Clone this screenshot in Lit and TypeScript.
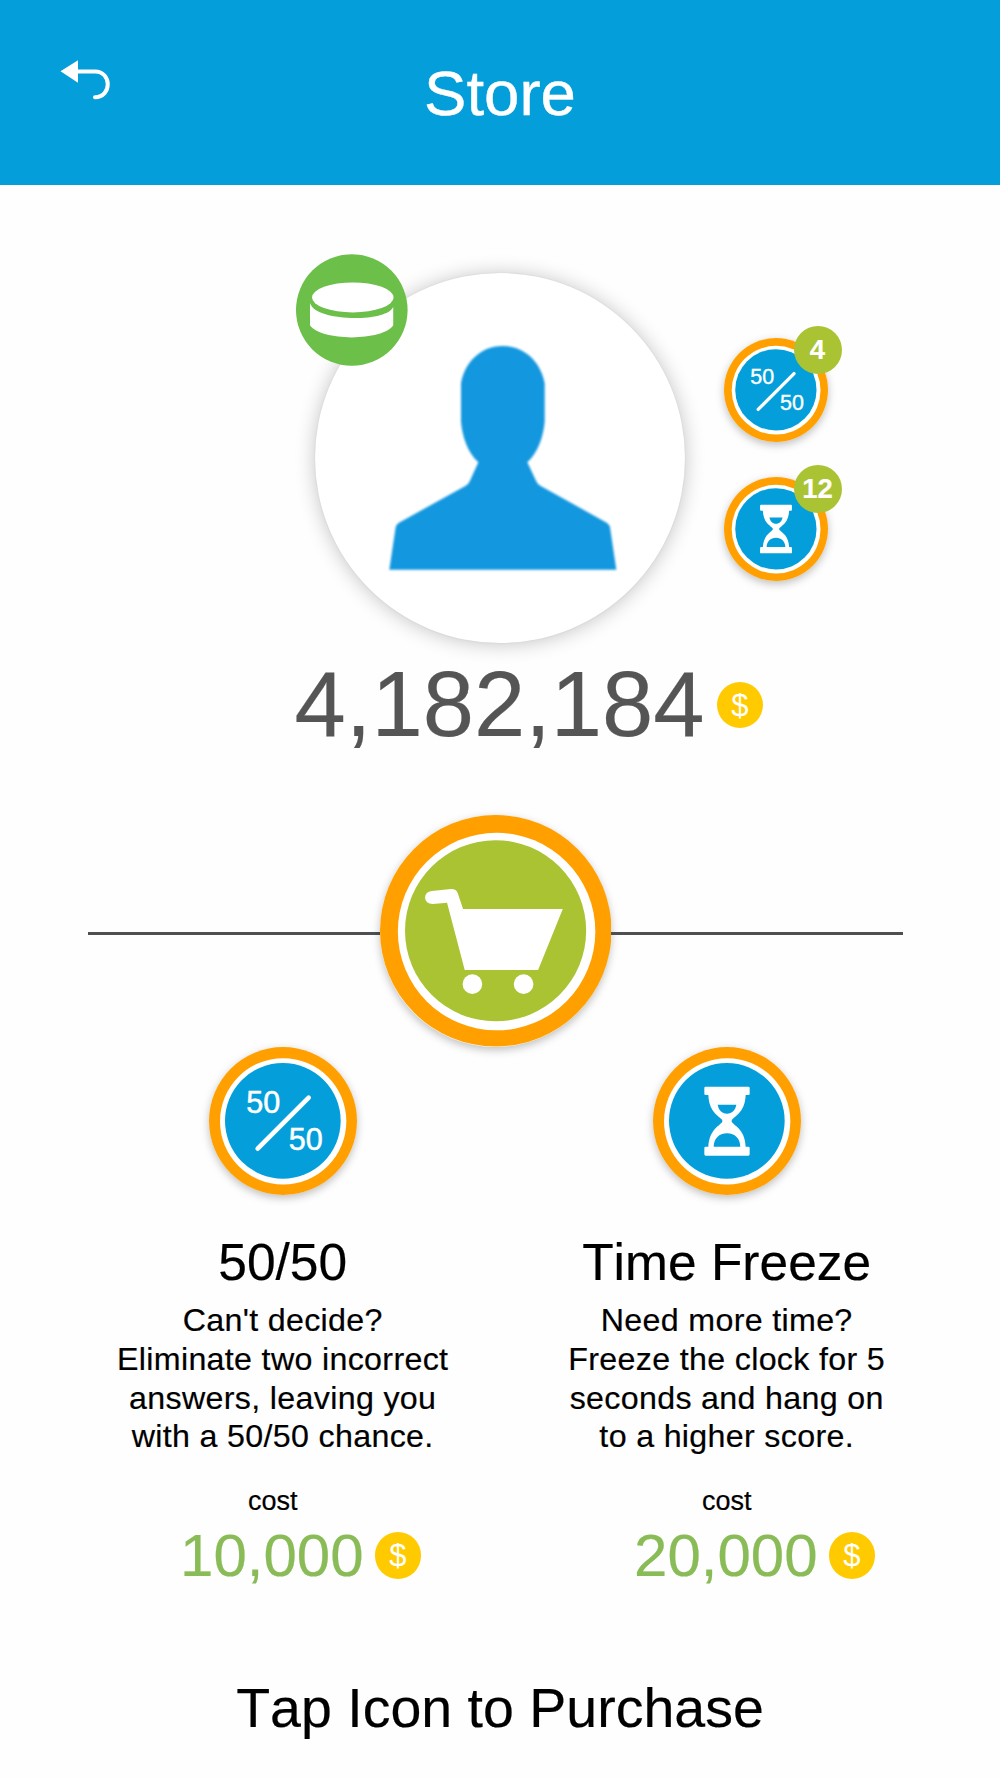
import { LitElement, html, css, svg } from "lit";
import { customElement, property } from "lit/decorators.js";

type Glyph = "fifty" | "freeze" | "cart";

const fifty = svg`
  <g fill="#fff" stroke="#fff" stroke-width="1.5" font-family="Liberation Sans, Arial, sans-serif" font-size="92">
    <text x="168" y="246" textLength="102" lengthAdjust="spacingAndGlyphs">50</text>
    <text x="295" y="357" textLength="102" lengthAdjust="spacingAndGlyphs">50</text>
  </g>
  <path d="M202 354L355 201" stroke="#fff" stroke-width="14" stroke-linecap="round" />`;

const freeze = svg`
  <g transform="translate(-13 0)">
    <path fill="#fff" d="M227 168H355Q359 168 359 172V189Q359 193 355 193H347C345 240 322 252 307 266Q302 271 307 276C322 290 345 302 347 348H355Q359 348 359 352V371Q359 375 355 375H227Q223 375 223 371V352Q223 348 227 348H235C238 302 260 290 275 276Q280 271 275 266C260 252 237 240 235 193H227Q223 193 223 189V172Q223 168 227 168Z" />
    <path fill="#049fda" d="M263 222H319C316 238 306 249 291 249S266 238 263 222ZM251 348C252 324 267 308 291 308S330 324 331 348Z" />
  </g>`;

const cart = svg`
  <path fill="#fff" d="M185 273L243 267Q258 266 263 279L279 327H578L504 510H284L231 308L188 312Q166 311 165 293Q166 275 185 273Z" />
  <circle cx="307" cy="552" r="29.5" fill="#fff" />
  <circle cx="460.500" cy="552" r="29.500" fill="#fff" />`;

@customElement("ring-icon")
class RingIcon extends LitElement {
  @property() glyph: Glyph = "fifty";

  static styles = css`
    :host {
      display: block;
      border-radius: 50%;
      box-shadow: 0 3px 8px rgba(0, 0, 0, 0.25);
    }
    .art {
      display: block;
      width: 100%;
      height: 100%;
    }
  `;

  render() {
    if (this.glyph === "cart") {
      return html`<svg class="art" viewBox="30 45 694 694">
        <circle cx="377" cy="392" r="347" fill="#ffa000" />
        <circle cx="379.5" cy="394.5" r="296" fill="#fff" />
        <circle cx="376.5" cy="392" r="271.5" fill="#aac333" />
        ${cart}
      </svg>`;
    }
    return html`<svg class="art" viewBox="56 49 444 444">
      <circle cx="278" cy="271" r="222" fill="#ffa000" />
      <circle cx="278.5" cy="272" r="189.500" fill="#fff" />
      <circle cx="277.5" cy="270.5" r="173.500" fill="#049fda" />
      ${this.glyph === "fifty" ? fifty : freeze}
    </svg>`;
  }
}

@customElement("coin-icon")
class CoinIcon extends LitElement {
  static styles = css`
    :host {
      display: block;
      flex: none;
      width: 46.6px;
      height: 46.6px;
      border-radius: 50%;
      background: #ffcb00;
      color: #fff;
      font: 31px/48px "Liberation Sans", Arial, sans-serif;
      text-align: center;
      -webkit-text-stroke-width: 0;
    }
  `;

  render() {
    return html`$`;
  }
}

interface Item {
  glyph: Glyph;
  title: string;
  lines: string[];
  cost: string;
  shift: string;
}

const ITEMS: Item[] = [
  {
    glyph: "fifty",
    title: "50/50",
    lines: ["Can't decide?", "Eliminate two incorrect", "answers, leaving you", "with a 50/50 chance."],
    cost: "10,000",
    shift: "pay left",
  },
  {
    glyph: "freeze",
    title: "Time Freeze",
    lines: ["Need more time?", "Freeze the clock for 5", "seconds and hang on", "to a higher score."],
    cost: "20,000",
    shift: "pay",
  },
];

const OWNED: { glyph: Glyph; count: number }[] = [
  { glyph: "fifty", count: 4 },
  { glyph: "freeze", count: 12 },
];

@customElement("app-root")
class AppRoot extends LitElement {
  static styles = css`
    :host {
      display: block;
      width: 1000px;
      height: 1778px;
      overflow: hidden;
      background: #fefefe;
      color: #000;
      font-family: "Liberation Sans", Arial, sans-serif;
      font-kerning: none;
      -webkit-text-stroke: 0.2px currentColor;
    }
    * {
      box-sizing: border-box;
    }
    .header {
      display: grid;
      grid-template-columns: 1fr auto 1fr;
      height: 185px;
      background: #049fda;
      color: #fff;
    }
    .back {
      display: block;
      width: 52px;
      height: 42px;
      margin: 59px 0 0 60px;
    }
    .title {
      margin: 0;
      padding-top: 53px;
      font-size: 63.5px;
      font-weight: 400;
      line-height: 80px;
      -webkit-text-stroke-width: 0.4px;
    }
    .profile {
      display: flex;
      padding: 88px 0 0 315px;
      height: 458px;
    }
    .avatar {
      position: relative;
      flex: none;
      width: 370px;
      height: 370px;
      border-radius: 50%;
      background: #fff;
      box-shadow: 0 0 2px rgba(0, 0, 0, 0.08), 0 1px 20px rgba(0, 0, 0, 0.24);
    }
    .person {
      display: block;
      width: 370px;
      height: 370px;
    }
    .sport {
      position: absolute;
      left: -19px;
      top: -19px;
      width: 111.6px;
      height: 112px;
    }
    .owned {
      display: flex;
      flex-direction: column;
      gap: 35px;
      padding: 65px 0 0 38.5px;
    }
    .power {
      position: relative;
      width: 104px;
      height: 104px;
    }
    .power ring-icon {
      width: 104px;
      height: 104px;
    }
    .count {
      position: absolute;
      left: 70px;
      top: -12.500px;
      width: 48px;
      height: 48px;
      border-radius: 50%;
      background: #aac333;
      color: #fff;
      font-size: 27.500px;
      font-weight: 700;
      line-height: 48.5px;
      text-align: center;
    }
    .balance {
      display: flex;
      align-items: center;
      gap: 12px;
      height: 104px;
      margin-top: 10px;
      padding-left: 294.5px;
      color: #555;
      font-size: 92.2px;
      line-height: 104px;
    }
    .divider {
      display: flex;
      align-items: center;
      margin-top: 58px;
      padding: 0 97px 0 88px;
    }
    .rule {
      flex: 1;
      height: 2.5px;
      margin-top: 5px;
      background: #4e4f51;
    }
    .shop {
      width: 231.500px;
      height: 231.500px;
    }
    .items {
      display: grid;
      grid-template-columns: repeat(2, 444px);
      padding-left: 60.700px;
    }
    .item {
      display: flex;
      flex-direction: column;
      align-items: center;
    }
    .item ring-icon {
      width: 148px;
      height: 148px;
    }
    .name {
      margin: 37px 0 0;
      font-size: 51.5px;
      font-weight: 400;
      line-height: 60px;
    }
    .text {
      margin: 9.600px 0 0;
      font-size: 32.2px;
      letter-spacing: 0.33px;
      line-height: 38.700px;
      text-align: center;
      white-space: nowrap;
    }
    .line {
      display: block;
    }
    .pay {
      display: flex;
      flex-direction: column;
      align-items: center;
      width: 297px;
    }
    .left {
      margin-right: 20px;
    }
    .cost {
      margin-top: 29px;
      font-size: 27px;
      line-height: 32px;
    }
    .price {
      display: flex;
      align-items: center;
      align-self: flex-end;
      gap: 11px;
      margin-top: 8px;
      color: #89bb57;
      font-size: 60px;
      line-height: 61px;
    }
    .hint {
      margin: 90px 0 0;
      font-size: 55.500px;
      line-height: 65px;
      text-align: center;
    }
  `;

  render() {
    return html`
      <header class="header">
        <svg class="back" viewBox="60 59 52 42">
          <path d="M60.5 71.300L78 60.300V82.700Z" fill="#fff" />
          <path d="M77 71.500H95C112 71.500 112 97.200 95 97.200" fill="none" stroke="#fff" stroke-width="4" stroke-linecap="round" />
        </svg>
        <h1 class="title">Store</h1>
      </header>

      <section class="profile">
        <div class="avatar">
          <svg class="person" viewBox="105 99 1110 1110">
            <defs>
              <filter id="soft" x="-5%" y="-5%" width="110%" height="110%" color-interpolation-filters="sRGB">
                <feGaussianBlur stdDeviation="3" />
              </filter>
            </defs>
            <path
              fill="#1397df"
              filter="url(#soft)"
              d="M543 430C553 372 598 318 668 318S784 372 794 430V545C790 590 774 638 742 667L768 722Q772 732 782 738L980 848Q988 853 990 862L1009 989H328L347 862Q349 853 357 848L556 738Q566 732 570 722L595 667C563 638 547 590 543 545Z"
            />
          </svg>
          <svg class="sport" viewBox="48 43 334 334">
            <circle cx="215" cy="210" r="167" fill="#6cbf49" />
            <ellipse cx="218" cy="172.500" rx="122" ry="45" fill="#fff" />
            <path fill="#fff" d="M90 189C105 247 324 247 339 200V256C310 304 120 304 90 256Z" />
          </svg>
        </div>
        <div class="owned">
          ${OWNED.map(
            (o) => html`<div class="power">
              <ring-icon .glyph=${o.glyph}></ring-icon>
              <span class="count">${o.count}</span>
            </div>`
          )}
        </div>
      </section>

      <div class="balance"><span>4,182,184</span><coin-icon></coin-icon></div>

      <div class="divider">
        <span class="rule"></span>
        <ring-icon class="shop" .glyph=${"cart"}></ring-icon>
        <span class="rule"></span>
      </div>

      <section class="items">
        ${ITEMS.map(
          (i) => html`<article class="item">
            <ring-icon .glyph=${i.glyph}></ring-icon>
            <h2 class="name">${i.title}</h2>
            <p class="text">${i.lines.map((l) => html`<span class="line">${l}</span>`)}</p>
            <div class=${i.shift}>
              <span class="cost">cost</span>
              <div class="price"><span>${i.cost}</span><coin-icon></coin-icon></div>
            </div>
          </article>`
        )}
      </section>

      <p class="hint">Tap Icon to Purchase</p>
    `;
  }
}
